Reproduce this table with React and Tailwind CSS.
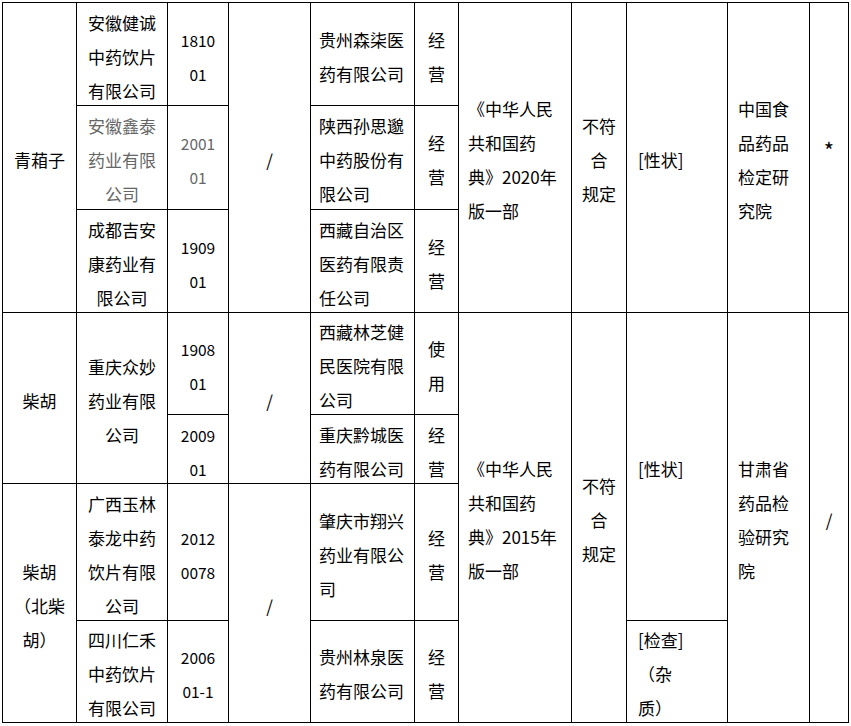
import React from "react";

const Lines = ({ lines }) =>
  lines.map((l, i) => (
    <div key={i} className="whitespace-nowrap">
      {l}
    </div>
  ));

function Cell({ pos, lines, align = "center", pad = "", gray = false, num = false, extra = "" }) {
  const al =
    align === "center"
      ? "items-center text-center"
      : "items-start text-left";
  return (
    <div
      className={`bg-white flex flex-col justify-center pt-[5px] leading-[34px] ${al} ${pad} ${pos} ${
        gray ? "text-[#666666]" : "text-black"
      } ${num ? "text-[15.5px]" : ""} ${extra}`}
    >
      <Lines lines={lines} />
    </div>
  );
}

export default function App() {
  return (
    <div className="bg-white w-[851px] h-[726px] pl-[2px] pt-[2px]">
      <div
        className="grid bg-black p-px gap-px w-fit text-[17px] grid-cols-[73px_90px_60px_81px_103px_43px_112px_54px_100px_81px_38px] grid-rows-[102px_103px_102px_101px_68px_136px_101px]"
        style={{ fontFamily: '"Noto Sans CJK SC", "Noto Sans", sans-serif' }}
      >
        {/* Group 1 */}
        <Cell pos="col-start-1 row-start-1 row-span-3" lines={["青葙子"]} />
        <Cell pos="col-start-2 row-start-1" lines={["安徽健诚", "中药饮片", "有限公司"]} />
        <Cell pos="col-start-2 row-start-2" gray lines={["安徽鑫泰", "药业有限", "公司"]} />
        <Cell pos="col-start-2 row-start-3" lines={["成都吉安", "康药业有", "限公司"]} />
        <Cell pos="col-start-3 row-start-1" num lines={["1810", "01"]} />
        <Cell pos="col-start-3 row-start-2" num gray lines={["2001", "01"]} />
        <Cell pos="col-start-3 row-start-3" num lines={["1909", "01"]} />
        <Cell pos="col-start-4 row-start-1 row-span-3" lines={["/"]} />
        <Cell pos="col-start-5 row-start-1" align="left" pad="pl-[8px]" lines={["贵州森柒医", "药有限公司"]} />
        <Cell pos="col-start-5 row-start-2" align="left" pad="pl-[8px]" lines={["陕西孙思邈", "中药股份有", "限公司"]} />
        <Cell pos="col-start-5 row-start-3" align="left" pad="pl-[8px]" lines={["西藏自治区", "医药有限责", "任公司"]} />
        <Cell pos="col-start-6 row-start-1" lines={["经", "营"]} />
        <Cell pos="col-start-6 row-start-2" lines={["经", "营"]} />
        <Cell pos="col-start-6 row-start-3" lines={["经", "营"]} />
        <Cell
          pos="col-start-7 row-start-1 row-span-3"
          align="left"
          pad="pl-[9px]"
          lines={["《中华人民", "共和国药", "典》2020年", "版一部"]}
        />
        <Cell pos="col-start-8 row-start-1 row-span-3" lines={["不符", "合", "规定"]} />
        <Cell pos="col-start-9 row-start-1 row-span-3" align="left" pad="pl-[11px]" lines={["[性状]"]} />
        <Cell
          pos="col-start-10 row-start-1 row-span-3"
          align="left"
          pad="pl-[10px]"
          lines={["中国食", "品药品", "检定研", "究院"]}
        />
        <Cell pos="col-start-11 row-start-1 row-span-3" extra="text-[22px] pb-[22px]" lines={["*"]} />

        {/* Group 2 */}
        <Cell pos="col-start-1 row-start-4 row-span-2" lines={["柴胡"]} />
        <Cell pos="col-start-2 row-start-4 row-span-2" lines={["重庆众妙", "药业有限", "公司"]} />
        <Cell pos="col-start-3 row-start-4" num lines={["1908", "01"]} />
        <Cell pos="col-start-3 row-start-5" num lines={["2009", "01"]} />
        <Cell pos="col-start-4 row-start-4 row-span-2" lines={["/"]} />
        <Cell pos="col-start-5 row-start-4" align="left" pad="pl-[8px]" lines={["西藏林芝健", "民医院有限", "公司"]} />
        <Cell pos="col-start-5 row-start-5" align="left" pad="pl-[8px]" lines={["重庆黔城医", "药有限公司"]} />
        <Cell pos="col-start-6 row-start-4" lines={["使", "用"]} />
        <Cell pos="col-start-6 row-start-5" lines={["经", "营"]} />
        <Cell
          pos="col-start-7 row-start-4 row-span-4"
          align="left"
          pad="pl-[9px]"
          lines={["《中华人民", "共和国药", "典》2015年", "版一部"]}
        />
        <Cell pos="col-start-8 row-start-4 row-span-4" lines={["不符", "合", "规定"]} />
        <Cell pos="col-start-9 row-start-4 row-span-3" align="left" pad="pl-[11px]" lines={["[性状]"]} />
        <Cell
          pos="col-start-10 row-start-4 row-span-4"
          align="left"
          pad="pl-[10px]"
          lines={["甘肃省", "药品检", "验研究", "院"]}
        />
        <Cell pos="col-start-11 row-start-4 row-span-4" lines={["/"]} />

        {/* Group 3 */}
        <Cell pos="col-start-1 row-start-6 row-span-2" lines={["柴胡", "（北柴", "胡）"]} />
        <Cell pos="col-start-2 row-start-6" lines={["广西玉林", "泰龙中药", "饮片有限", "公司"]} />
        <Cell pos="col-start-2 row-start-7" lines={["四川仁禾", "中药饮片", "有限公司"]} />
        <Cell pos="col-start-3 row-start-6" num lines={["2012", "0078"]} />
        <Cell pos="col-start-3 row-start-7" num lines={["2006", "01-1"]} />
        <Cell pos="col-start-4 row-start-6 row-span-2" lines={["/"]} />
        <Cell pos="col-start-5 row-start-6" align="left" pad="pl-[8px]" lines={["肇庆市翔兴", "药业有限公", "司"]} />
        <Cell pos="col-start-5 row-start-7" align="left" pad="pl-[8px]" lines={["贵州林泉医", "药有限公司"]} />
        <Cell pos="col-start-6 row-start-6" lines={["经", "营"]} />
        <Cell pos="col-start-6 row-start-7" lines={["经", "营"]} />
        <Cell
          pos="col-start-9 row-start-7"
          align="left"
          pad="pl-[11px]"
          lines={["[检查]", "（杂", "质）"]}
        />
      </div>
    </div>
  );
}
